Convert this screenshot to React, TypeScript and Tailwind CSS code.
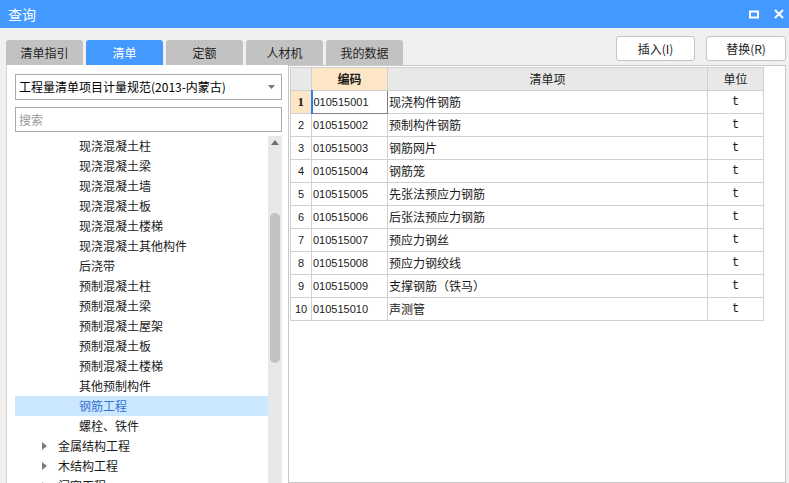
import React from 'react';

const tabs = ['清单指引', '清单', '定额', '人材机', '我的数据'];

const treeItems: { label: string; level: number; selected?: boolean }[] = [
  { label: '现浇混凝土柱', level: 3 },
  { label: '现浇混凝土梁', level: 3 },
  { label: '现浇混凝土墙', level: 3 },
  { label: '现浇混凝土板', level: 3 },
  { label: '现浇混凝土楼梯', level: 3 },
  { label: '现浇混凝土其他构件', level: 3 },
  { label: '后浇带', level: 3 },
  { label: '预制混凝土柱', level: 3 },
  { label: '预制混凝土梁', level: 3 },
  { label: '预制混凝土屋架', level: 3 },
  { label: '预制混凝土板', level: 3 },
  { label: '预制混凝土楼梯', level: 3 },
  { label: '其他预制构件', level: 3 },
  { label: '钢筋工程', level: 3, selected: true },
  { label: '螺栓、铁件', level: 3 },
  { label: '金属结构工程', level: 2 },
  { label: '木结构工程', level: 2 },
  { label: '门窗工程', level: 2 },
];

const rows = [
  ['010515001', '现浇构件钢筋'],
  ['010515002', '预制构件钢筋'],
  ['010515003', '钢筋网片'],
  ['010515004', '钢筋笼'],
  ['010515005', '先张法预应力钢筋'],
  ['010515006', '后张法预应力钢筋'],
  ['010515007', '预应力钢丝'],
  ['010515008', '预应力钢绞线'],
  ['010515009', '支撑钢筋（铁马）'],
  ['010515010', '声测管'],
];

const cjk = "font-['Microsoft_YaHei','Noto_Sans_CJK_SC',sans-serif]";

const App: React.FC = () => {
  return (
    <div className={`w-[789px] h-[483px] overflow-hidden bg-[#f0f0f0] flex flex-col ${cjk} text-[#1a1a1a]`}>
      {/* title bar */}
      <div className="h-[28px] bg-[#4399ff] flex items-center justify-between pl-[8px] pr-[5px] shrink-0">
        <span className="text-white text-[14px] leading-none">查询</span>
        <div className="flex items-center gap-[15px]">
          <svg width="10" height="9" viewBox="0 0 10 9">
            <rect x="1" y="1.5" width="8" height="6" fill="none" stroke="white" strokeWidth="2" />
          </svg>
          <svg width="10" height="10" viewBox="0 0 10 10">
            <path d="M1 1 L9 9 M9 1 L1 9" stroke="white" strokeWidth="2" />
          </svg>
        </div>
      </div>

      {/* tabs + buttons */}
      <div className="h-[37px] flex shrink-0">
        <div className="flex items-end gap-[3px] pl-[6px]">
          {tabs.map(t => (
            <div
              key={t}
              className={`w-[77px] h-[25px] rounded-t-[3px] flex items-center justify-center text-[12px] ${
                t === '清单' ? 'bg-[#4399ff] text-white' : 'bg-[#c2c2c2] text-[#222]'
              }`}
            >
              {t}
            </div>
          ))}
        </div>
        <div className="ml-auto flex items-start pt-[8px] gap-[11px] pr-[3px]">
          <button className="w-[79px] h-[25px] bg-white border border-[#c4c4c4] rounded-[3px] text-[12px] text-[#222]">插入(I)</button>
          <button className="w-[80px] h-[25px] bg-white border border-[#c4c4c4] rounded-[3px] text-[12px] text-[#222]">替换(R)</button>
        </div>
      </div>

      {/* content */}
      <div className="flex flex-1 min-h-0">
        {/* left panel */}
        <div className="ml-[6px] w-[282px] bg-white border-l border-[#d4d4d4] flex flex-col pl-[8px] pt-[9px]">
          <div className="w-[267px] h-[26px] border border-[#aaa] flex items-center pl-[3px] pr-[6px]">
            <span className="text-[12px] text-black flex-1 whitespace-nowrap">工程量清单项目计量规范(2013-内蒙古)</span>
            <svg width="7" height="4" viewBox="0 0 7 4"><path d="M0 0 H7 L3.5 4 Z" fill="#777" /></svg>
          </div>
          <div className="w-[267px] h-[25px] mt-[7px] border border-[#aaa] flex items-center pl-[3px]">
            <span className="text-[12px] text-[#9a9a9a]">搜索</span>
          </div>
          <div className="flex flex-1 min-h-0 mt-[4px] w-[267px]">
            <div className="flex-1 overflow-hidden">
              {treeItems.map(it => (
                <div
                  key={it.label}
                  className={`h-[20px] flex items-center text-[12px] whitespace-nowrap ${
                    it.selected ? 'bg-[#cce8ff] text-[#3473d4]' : ''
                  } ${it.level === 3 ? 'pl-[64px]' : 'pl-[27px]'}`}
                >
                  {it.level === 2 && (
                    <svg width="5" height="8" viewBox="0 0 5 8" className="mr-[11px]"><path d="M0 0 L5 4 L0 8 Z" fill="#7a7a7a" /></svg>
                  )}
                  {it.label}
                </div>
              ))}
            </div>
            <div className="w-[14px] bg-[#e8e8e8] flex flex-col items-center">
              <svg width="8" height="5" viewBox="0 0 8 5" className="mt-[4px]"><path d="M0 5 L4 0 L8 5 Z" fill="#6e6e6e" /></svg>
              <div className="w-[10px] h-[150px] mt-[68px] rounded-[5px] bg-[#c2c2c2]" />
            </div>
          </div>
        </div>

        {/* right panel */}
        <div className="w-[498px] bg-white border border-[#c8c8c8] p-[1px]">
          <table className="border-collapse table-fixed text-[12px]" style={{ width: 473 }}>
            <colgroup>
              <col className="w-[21px]" />
              <col className="w-[76px]" />
              <col className="w-[320px]" />
              <col className="w-[56px]" />
            </colgroup>
            <thead>
              <tr className="h-[23px]">
                <th className="bg-[#e8e8e8] border border-[#d0d0d0]" />
                <th className="bg-[#fde6c6] border border-[#d0d0d0] font-bold text-[12px]">编码</th>
                <th className="bg-[#e8e8e8] border border-[#d0d0d0] font-normal text-[12px]">清单项</th>
                <th className="bg-[#e8e8e8] border border-[#d0d0d0] font-normal text-[12px]">单位</th>
              </tr>
            </thead>
            <tbody>
              {rows.map(([code, name], i) => (
                <tr key={code} className="h-[23px]">
                  <td
                    className={`border border-[#d0d0d0] text-center p-0 ${
                      i === 0
                        ? "bg-[#fde6c6] font-bold font-['Liberation_Serif',serif] text-[13px]"
                        : "font-['Liberation_Sans',sans-serif] text-[11px]"
                    }`}
                  >
                    {i + 1}
                  </td>
                  <td
                    className={`font-['Liberation_Sans',sans-serif] text-[11px] pl-[1px] p-0 ${
                      i === 0 ? 'border border-[#808080] border-l-2 border-l-[#2f7df5]' : 'border border-[#d0d0d0]'
                    }`}
                  >
                    {code}
                  </td>
                  <td className="border border-[#d0d0d0] pl-[1px] text-[12px]">{name}</td>
                  <td className="border border-[#d0d0d0] text-center font-['Liberation_Mono',monospace] text-[12px]">t</td>
                </tr>
              ))}
            </tbody>
          </table>
        </div>
      </div>
    </div>
  );
};

export default App;
